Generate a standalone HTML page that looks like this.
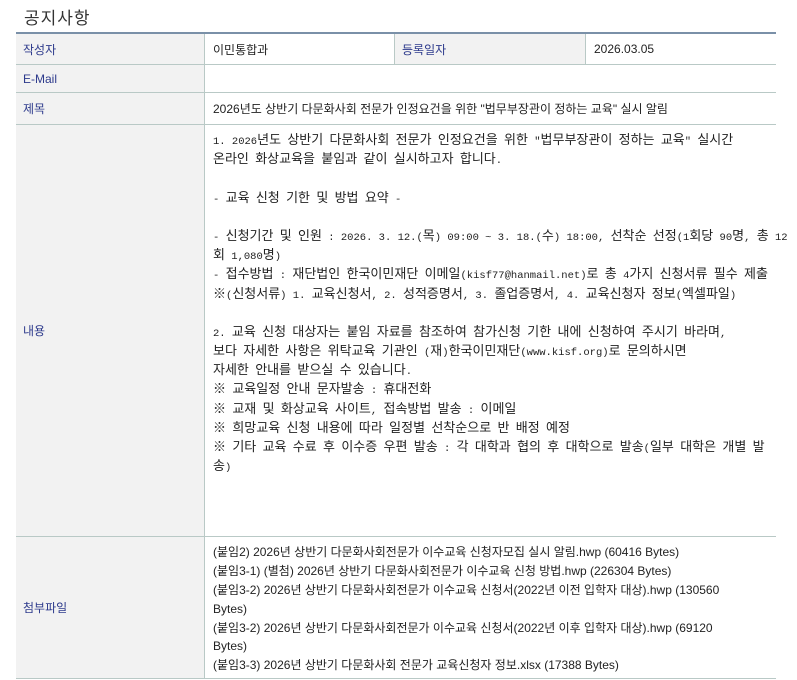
<!DOCTYPE html>
<html><head><meta charset="utf-8"><style>
*{margin:0;padding:0;box-sizing:border-box}
body{width:797px;height:680px;background:#fff;font-family:"Liberation Sans","Noto Sans CJK KR",sans-serif;font-size:12px;color:#222;position:relative;overflow:hidden}
h1{position:absolute;left:24px;top:4px;font-size:17px;font-weight:normal;color:#333;letter-spacing:1px}
.t{position:absolute;left:16px;top:32px;width:760px;border-top:2px solid #7a90a8}
.r{display:flex;border-bottom:1px solid #b9c9c6}
.l{flex:none;width:189px;background:#f2f2f2;color:#2d3a8c;padding-left:7px;display:flex;align-items:center;border-right:1px solid #b9c9c6}
.v{flex:1;min-width:0;padding-left:8px;display:flex;align-items:center}
.lines{font-family:"Liberation Mono",monospace;font-size:10.5px;overflow:visible}
.lines div{height:19.2px;line-height:19.2px;white-space:pre}
.lines b{font-weight:normal;font-family:"Noto Sans CJK KR",sans-serif;font-size:13px}
.att div{height:18.9px;line-height:18.9px;white-space:nowrap}
</style></head><body>
<h1>공지사항</h1>
<div class="t">
 <div class="r" style="height:31px">
  <div class="l">작성자</div>
  <div class="v" style="flex:none;width:190px;border-right:1px solid #b9c9c6">이민통합과</div>
  <div class="l" style="width:191px">등록일자</div>
  <div class="v">2026.03.05</div>
 </div>
 <div class="r" style="height:28px"><div class="l">E-Mail</div><div class="v"></div></div>
 <div class="r" style="height:32px"><div class="l">제목</div><div class="v">2026년도 상반기 다문화사회 전문가 인정요건을 위한 "법무부장관이 정하는 교육" 실시 알림</div></div>
 <div class="r" style="height:412px"><div class="l">내용</div>
  <div class="v lines" style="display:block;padding-top:4px">
   <div>1. 2026<b>년도</b> <b>상반기</b> <b>다문화사회</b> <b>전문가</b> <b>인정요건을</b> <b>위한</b> "<b>법무부장관이</b> <b>정하는</b> <b>교육</b>" <b>실시간</b></div>
   <div><b>온라인</b> <b>화상교육을</b> <b>붙임과</b> <b>같이</b> <b>실시하고자</b> <b>합니다</b>.</div>
   <div></div>
   <div>- <b>교육</b> <b>신청</b> <b>기한</b> <b>및</b> <b>방법</b> <b>요약</b> -</div>
   <div></div>
   <div>- <b>신청기간</b> <b>및</b> <b>인원</b> : 2026. 3. 12.(<b>목</b>) 09:00 ~ 3. 18.(<b>수</b>) 18:00, <b>선착순</b> <b>선정</b>(1<b>회당</b> 90<b>명</b>, <b>총</b> 12</div>
   <div><b>회</b> 1,080<b>명</b>)</div>
   <div>- <b>접수방법</b> : <b>재단법인</b> <b>한국이민재단</b> <b>이메일</b>(kisf77@hanmail.net)<b>로</b> <b>총</b> 4<b>가지</b> <b>신청서류</b> <b>필수</b> <b>제출</b></div>
   <div><b>※</b>(<b>신청서류</b>) 1. <b>교육신청서</b>, 2. <b>성적증명서</b>, 3. <b>졸업증명서</b>, 4. <b>교육신청자</b> <b>정보</b>(<b>엑셀파일</b>)</div>
   <div></div>
   <div>2. <b>교육</b> <b>신청</b> <b>대상자는</b> <b>붙임</b> <b>자료를</b> <b>참조하여</b> <b>참가신청</b> <b>기한</b> <b>내에</b> <b>신청하여</b> <b>주시기</b> <b>바라며</b>,</div>
   <div><b>보다</b> <b>자세한</b> <b>사항은</b> <b>위탁교육</b> <b>기관인</b> (<b>재</b>)<b>한국이민재단</b>(www.kisf.org)<b>로</b> <b>문의하시면</b></div>
   <div><b>자세한</b> <b>안내를</b> <b>받으실</b> <b>수</b> <b>있습니다</b>.</div>
   <div><b>※</b> <b>교육일정</b> <b>안내</b> <b>문자발송</b> : <b>휴대전화</b></div>
   <div><b>※</b> <b>교재</b> <b>및</b> <b>화상교육</b> <b>사이트</b>, <b>접속방법</b> <b>발송</b> : <b>이메일</b></div>
   <div><b>※</b> <b>희망교육</b> <b>신청</b> <b>내용에</b> <b>따라</b> <b>일정별</b> <b>선착순으로</b> <b>반</b> <b>배정</b> <b>예정</b></div>
   <div><b>※</b> <b>기타</b> <b>교육</b> <b>수료</b> <b>후</b> <b>이수증</b> <b>우편</b> <b>발송</b> : <b>각</b> <b>대학과</b> <b>협의</b> <b>후</b> <b>대학으로</b> <b>발송</b>(<b>일부</b> <b>대학은</b> <b>개별</b> <b>발</b></div>
   <div><b>송</b>)</div>
  </div>
 </div>
 <div class="r" style="height:142px"><div class="l">첨부파일</div>
  <div class="v att" style="display:block;padding-top:6px">
   <div>(붙임2) 2026년 상반기 다문화사회전문가 이수교육 신청자모집 실시 알림.hwp (60416 Bytes)</div>
   <div>(붙임3-1) (별첨) 2026년 상반기 다문화사회전문가 이수교육 신청 방법.hwp (226304 Bytes)</div>
   <div>(붙임3-2) 2026년 상반기 다문화사회전문가 이수교육 신청서(2022년 이전 입학자 대상).hwp (130560</div>
   <div>Bytes)</div>
   <div>(붙임3-2) 2026년 상반기 다문화사회전문가 이수교육 신청서(2022년 이후 입학자 대상).hwp (69120</div>
   <div>Bytes)</div>
   <div>(붙임3-3) 2026년 상반기 다문화사회 전문가 교육신청자 정보.xlsx (17388 Bytes)</div>
  </div>
 </div>
</div>
</body></html>
